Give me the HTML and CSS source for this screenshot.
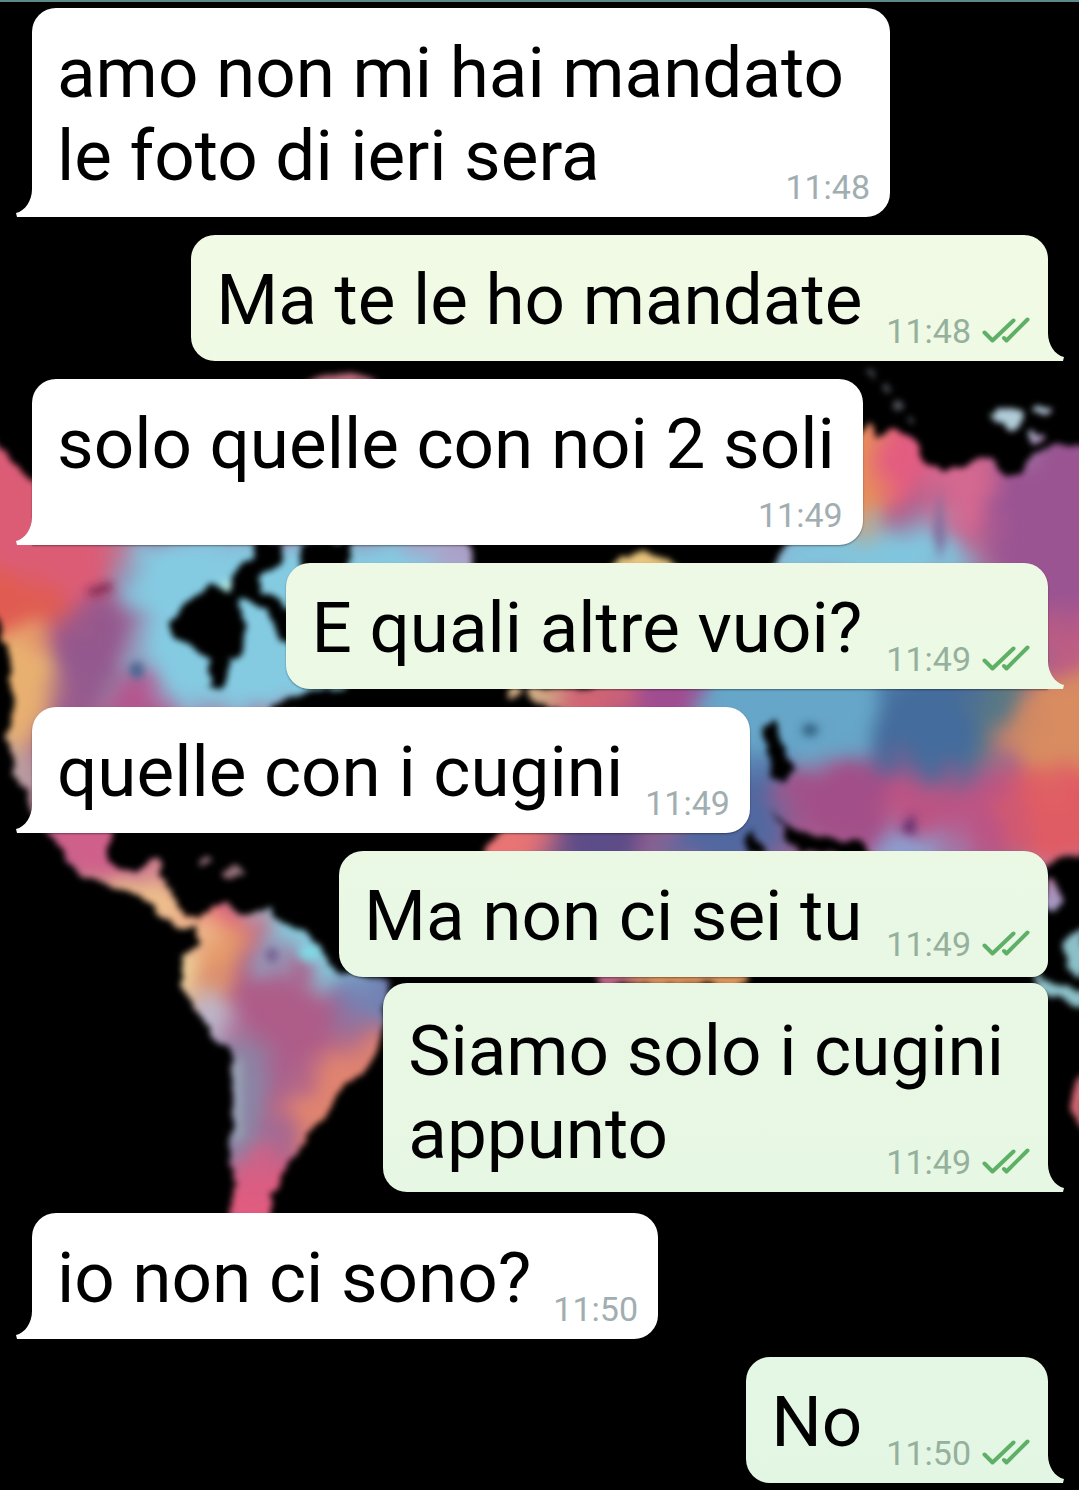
FILE: index.html
```
<!DOCTYPE html>
<html lang="it">
<head>
<meta charset="UTF-8">
<meta name="viewport" content="width=device-width, initial-scale=1.0">
<title>Chat</title>
<link rel="stylesheet" href="styles.css">
</head>
<body>
<svg class="wallpaper" viewBox="0 0 1079 1490" preserveAspectRatio="xMidYMin slice" aria-hidden="true">
  <defs>
    <filter id="soft" filterUnits="userSpaceOnUse" x="-40" y="0" width="1160" height="1490" color-interpolation-filters="sRGB">
      <feGaussianBlur stdDeviation="10" result="blobs"/>
      <feTurbulence type="fractalNoise" baseFrequency="0.025" numOctaves="3" seed="9" result="noise"/>
      <feDisplacementMap in="blobs" in2="noise" scale="60" xChannelSelector="R" yChannelSelector="G"/>
      <feGaussianBlur stdDeviation="8"/>
    </filter>
    <filter id="softer" x="-20%" y="-20%" width="140%" height="140%"><feGaussianBlur stdDeviation="5"/></filter>
    <filter id="coast" filterUnits="userSpaceOnUse" x="-20" y="0" width="1120" height="1490" color-interpolation-filters="sRGB">
      <feTurbulence type="fractalNoise" baseFrequency="0.06" numOctaves="2" seed="4" result="noise"/>
      <feDisplacementMap in="SourceGraphic" in2="noise" scale="14" xChannelSelector="R" yChannelSelector="G"/>
      <feGaussianBlur stdDeviation="3"/>
    </filter>
    <mask id="land" maskUnits="userSpaceOnUse" x="0" y="0" width="1079" height="1490">
      <g filter="url(#coast)">
        <g fill="#fff">
          <!-- north and central america -->
          <path d="M-20 430L10 458L36 482L60 400L300 400L470 540L474 563L450 620L330 695L300 712L200 780L112 830L108 852L118 871L138 874L146 862L158 857L164 864L158 878L174 888L176 904L184 916L200 919L198 925L174 925L158 912L136 896L106 884L74 872L62 850L48 834L34 812L16 776L6 738L14 700L8 660L-2 620L-20 600Z"/>
          <!-- south america -->
          <path d="M198 925L205 910L225 904L250 913L270 909L285 925L305 931L318 945L326 963L345 974L390 982L384 1020L375 1052L366 1072L340 1088L330 1110L310 1136L292 1160L278 1180L272 1196L274 1222L230 1222L234 1180L230 1150L233 1100L231 1050L210 1035L195 1005L180 982L183 960L196 945Z"/>
          <!-- greenland, scandinavia, britain -->
          <path d="M300 385Q345 365 382 385Z"/>
          <path d="M604 570Q642 536 678 570Z"/>
          <circle cx="514" cy="692" r="7"/>
          <ellipse cx="543" cy="694" rx="16" ry="10"/>
          <!-- asia -->
          <path d="M785 545L840 480L855 440L866 424L876 438L894 430L916 438L926 464L948 470L964 468L978 456L992 458L1006 478L1022 474L1036 452L1060 446L1100 448L1100 850L1066 856L1040 870L850 870L740 860L720 830L600 720L545 708L556 690L640 680L740 640Z"/>
          <!-- africa -->
          <path d="M478 860L500 832L560 822L650 824L760 820L780 860L745 985L600 985L560 900Z"/>
          <!-- islands -->
          <path d="M988 411Q1008 404 1026 412L1012 432Q996 426 988 411Z"/>
          <ellipse cx="1042" cy="410" rx="10" ry="5"/>
          <ellipse cx="1034" cy="438" rx="9" ry="6"/>
          <ellipse cx="1052" cy="895" rx="10" ry="16"/>
          <path d="M1062 945L1085 925L1085 975L1066 966Z"/>
          <path d="M1025 958L1044 980L1085 994L1085 1006L1040 994Z"/>
          <path d="M1085 1065L1070 1095L1074 1122L1085 1132Z"/>
          <ellipse cx="205" cy="862" rx="9" ry="4"/>
          <ellipse cx="234" cy="871" rx="12" ry="5"/>
        </g>
        <g fill="#000">
          <path d="M172 622L190 600L212 584L232 592L246 625L240 658L228 660L224 688L210 686L208 660L194 650L176 637Z"/>
          <path d="M230 598L234 572L252 560L260 536L282 545L282 566L262 576L264 590L282 602L296 620L292 642L276 638L272 614L250 602Z"/>
          <path d="M304 540L352 540L346 572L300 572Z"/>
          <path d="M272 704L300 694L330 690L330 712L272 712Z"/>
          <path d="M740 540L785 540L780 552L740 556Z"/>
          <path d="M758 728L774 722L782 744L796 772L784 784L774 776L768 752Z"/>
          <path d="M770 812L788 828L820 838L856 840L874 856L800 852Z"/>
          <path d="M750 830L766 852L746 852Z"/>
        </g>
      </g>
    </mask>
  </defs>
  <g mask="url(#land)">
    <rect width="1079" height="1490" fill="#a8628f"/>
    <g filter="url(#soft)">
      <!-- north america -->
      <path d="M-40 400L130 480L120 560L70 640L-40 600Z" fill="#dc5c76"/>
      <path d="M-40 570L40 570L70 610L40 650L-40 640Z" fill="#e05c52"/>
      <path d="M-40 625L48 636L62 680L36 740L-40 740Z" fill="#e8b070"/>
      <path d="M64 620L110 590L130 660L90 710L50 780L60 700Z" fill="#93588e"/>
      <path d="M130 530L480 530L480 600L400 720L190 720L140 660L120 590Z" fill="#84cbe2"/>
      <ellipse cx="118" cy="682" rx="20" ry="14" fill="#9598ae"/>
      <path d="M120 690L160 680L180 720L90 720Z" fill="#b8508c"/>
      <path d="M400 540L500 540L500 570L430 570Z" fill="#b49ac4"/>
      <path d="M-40 730L30 740L50 820L-40 820Z" fill="#b99da0"/>
      <path d="M30 810L140 810L120 870L60 870Z" fill="#d0608a"/>
      <path d="M136 840L190 840L186 882L140 876Z" fill="#d88090"/>
      <path d="M60 876L140 876L225 904L215 950L140 926Z" fill="#f0c08c"/>
      <!-- south america -->
      <path d="M190 880L245 880L262 925L220 960Z" fill="#e2607c"/>
      <path d="M190 940L236 924L244 970L210 1010L180 980Z" fill="#e69a68"/>
      <path d="M150 940L196 950L208 988L150 990Z" fill="#f4dc9c"/>
      <path d="M244 870L300 880L350 940L400 960L370 1010L320 988L260 940Z" fill="#86cbdc"/>
      <path d="M345 965L420 965L405 1035L340 1020Z" fill="#7283b4"/>
      <path d="M240 950L290 975L340 1000L332 1060L290 1080L230 1010Z" fill="#ae5c88"/>
      <path d="M160 990L215 1000L240 1060L190 1070Z" fill="#bcb8cc"/>
      <path d="M195 1040L262 1040L270 1160L195 1160Z" fill="#8a86a6"/>
      <path d="M420 1020L390 1120L300 1180L290 1100L340 1050Z" fill="#e08470"/>
      <path d="M195 1172L320 1155L320 1270L195 1270Z" fill="#e05c80"/>
      <!-- europe and asia -->
      <path d="M290 330L410 330L410 410L290 410Z" fill="#c87484"/>
      <path d="M590 510L700 510L690 600L590 600Z" fill="#e8c47c"/>
      <path d="M480 660L560 660L550 725L480 725Z" fill="#d0ac84"/>
      <path d="M550 660L620 660L620 740L550 740Z" fill="#d06474"/>
      <path d="M620 660L700 650L700 740L620 740Z" fill="#a04c90"/>
      <path d="M830 400L878 410L882 530L830 530Z" fill="#e89058"/>
      <path d="M880 390L925 390L925 480L880 510Z" fill="#e45c80"/>
      <path d="M925 430L1000 420L1020 500L980 540L930 520Z" fill="#d46890"/>
      <path d="M1000 430L1130 410L1130 680L1050 660L990 560Z" fill="#9a5492"/>
      <path d="M1030 630L1120 600L1120 680L1050 690Z" fill="#bc5c84"/>
      <path d="M770 540L850 522L940 522L990 580L770 590Z" fill="#80c6de"/>
      <path d="M700 650L960 650L920 730L800 770L740 800L700 720Z" fill="#66a6c8"/>
      <path d="M890 670L1030 660L1000 740L970 790L860 770Z" fill="#446c9c"/>
      <path d="M985 660L1030 650L1020 720L980 760Z" fill="#5c7a80"/>
      <path d="M1040 680L1130 650L1130 800L1000 790L1010 740Z" fill="#d88c60"/>
      <path d="M790 780L860 762L910 780L880 850L800 830Z" fill="#a24e88"/>
      <path d="M890 780L1010 775L1030 860L880 850Z" fill="#bc5484"/>
      <path d="M1000 785L1130 765L1130 880L1020 860Z" fill="#e05c64"/>
      <path d="M735 760L770 756L795 840L700 880L650 850Z" fill="#5068a0"/>
      <path d="M880 835L960 835L950 885L880 885Z" fill="#8aa0d0"/>
      <!-- africa -->
      <path d="M440 800L560 800L540 890L440 890Z" fill="#e87474"/>
      <path d="M560 800L640 800L640 890L550 890Z" fill="#5c4c88"/>
      <path d="M570 940L660 940L660 1020L570 1020Z" fill="#bc6488"/>
      <path d="M640 940L780 940L780 1020L640 1020Z" fill="#dc945c"/>
      <!-- islands -->
      <path d="M960 360L1080 360L1070 428L1020 446L960 440Z" fill="#b0ccd8"/>
      <path d="M1000 945L1130 900L1130 1040L1010 1030Z" fill="#8cc0c8"/>
      <ellipse cx="1056" cy="895" rx="28" ry="30" fill="#a49cc8"/>
      <path d="M1030 1040L1120 1040L1120 1150L1030 1150Z" fill="#d46874"/>
      <path d="M180 835L275 840L270 895L180 890Z" fill="#8c7078"/>
    </g>
    <g filter="url(#softer)">
      <path d="M86 590L112 582L112 590L92 596Z" fill="#7c2048"/>
      <path d="M128 668L140 660L144 674L136 680Z" fill="#38608c"/>
      <path d="M934 532L940 486L945 540L940 562Z" fill="#7c6c9c"/>
      <ellipse cx="810" cy="730" rx="8" ry="6" fill="#2c5878"/>
      <path d="M900 830L914 812L916 836Z" fill="#642c6c"/>
      <ellipse cx="272" cy="955" rx="5" ry="7" fill="#685088"/>
      <ellipse cx="310" cy="952" rx="12" ry="9" fill="#80d8e4"/>
      <ellipse cx="228" cy="588" rx="8" ry="7" fill="#b8e8d8"/>
      <path d="M232 1060L242 1060L242 1140L234 1140Z" fill="#98a4b4"/>
    </g>
  </g>
  <!-- arctic islands off the siberian coast -->
  <path d="M868 372L886 386L902 410L918 430" fill="none" stroke="#50545c" stroke-width="6" stroke-dasharray="10 10" filter="url(#coast)"/>
</svg>

<svg class="symbols" aria-hidden="true">
  <symbol id="read" viewBox="0 0 48 27">
    <path d="M2.500 15.500L10.500 23.500L31.500 3.500M22 21L24.500 23.500L45.500 2.500" fill="none" stroke="currentColor" stroke-width="4" stroke-linecap="round" stroke-linejoin="round"/>
  </symbol>
</svg>

<main class="chat">
  <div class="message in overlap">
    <p class="text">amo non mi hai mandato<br>le foto di ieri sera</p>
    <div class="meta"><time>11:48</time></div>
  </div>
  <div class="message out">
    <p class="text">Ma te le ho mandate</p>
    <div class="meta"><time>11:48</time><svg class="ticks" role="img" aria-label="Letto"><use href="#read"/></svg></div>
  </div>
  <div class="message in stacked">
    <p class="text">solo quelle con noi 2 soli</p>
    <div class="meta"><time>11:49</time></div>
  </div>
  <div class="message out">
    <p class="text">E quali altre vuoi?</p>
    <div class="meta"><time>11:49</time><svg class="ticks" role="img" aria-label="Letto"><use href="#read"/></svg></div>
  </div>
  <div class="message in">
    <p class="text">quelle con i cugini</p>
    <div class="meta"><time>11:49</time></div>
  </div>
  <div class="message out first">
    <p class="text">Ma non ci sei tu</p>
    <div class="meta"><time>11:49</time><svg class="ticks" role="img" aria-label="Letto"><use href="#read"/></svg></div>
  </div>
  <div class="message out overlap last">
    <p class="text">Siamo solo i cugini<br>appunto</p>
    <div class="meta"><time>11:49</time><svg class="ticks" role="img" aria-label="Letto"><use href="#read"/></svg></div>
  </div>
  <div class="message in">
    <p class="text">io non ci sono?</p>
    <div class="meta"><time>11:50</time></div>
  </div>
  <div class="message out">
    <p class="text">No</p>
    <div class="meta"><time>11:50</time><svg class="ticks" role="img" aria-label="Letto"><use href="#read"/></svg></div>
  </div>
</main>
</body>
</html>
```

FILE: styles.css
```
* {
  box-sizing: border-box;
}
body {
  margin: 0;
  background-color: #000;
  font-family: Roboto, sans-serif;
}
.wallpaper {
  position: absolute;
  top: 0;
  left: 0;
  width: 100%;
  height: 100%;
  z-index: -1;
}
.symbols {
  display: none;
}
.chat {
  display: flex;
  flex-direction: column;
  gap: 18px;
  padding: 6px 31px 7px 32px;
  border-top: 2px solid #5c8a88;
}
.message {
  position: relative;
  display: flex;
  align-items: flex-end;
  gap: 24px;
  padding: 23px 20px 20px 25px;
  border-radius: 24px;
  box-shadow: 0 1px 2px rgba(0, 0, 0, 0.4);
}
.text {
  margin: 0;
  font-size: 71px;
  line-height: 83px;
  color: #000;
}
.meta {
  display: flex;
  align-items: center;
  gap: 11px;
  height: 20px;
  font-size: 34px;
  line-height: 20px;
  color: #a1aeb1;
}
.in {
  align-self: flex-start;
  gap: 22px;
  background: #fff;
  border-bottom-left-radius: 0;
}
.out {
  align-self: flex-end;
  padding-right: 18px;
  background: linear-gradient(#f3fbe4, #e3f6e4) fixed;
  border-bottom-right-radius: 0;
}
.out .meta {
  color: #95b09c;
}
.ticks {
  width: 48px;
  height: 27px;
  margin-bottom: 2px;
  color: #5fb067;
}

/* bubble tails */
.message::after {
  content: "";
  position: absolute;
  bottom: 0;
  width: 16px;
  height: 28px;
  background: inherit;
}
.in::after {
  right: 100%;
  clip-path: path("M16 0C16 12 9 22 0 24L1 28H16Z");
}
.out::after {
  left: 100%;
  clip-path: path("M0 0C0 12 7 22 16 24L15 28H0Z");
}

/* time shares the last line of a longer text */
.overlap {
  display: grid;
}
.overlap .text,
.overlap .meta {
  grid-area: 1 / 1;
}
.overlap .text {
  padding-right: 26px;
}
.overlap .meta {
  align-self: end;
  justify-self: end;
}
/* time on a row of its own */
.stacked {
  flex-direction: column;
  gap: 20px;
}
.stacked .text {
  padding-right: 8px;
}

/* messages of the same group */
.first {
  margin-bottom: -12px;
  border-bottom-right-radius: 16px;
}
.first::after {
  display: none;
}
.last {
  margin-bottom: 3px;
  padding-top: 26px;
  padding-bottom: 17px;
  border-top-right-radius: 16px;
}
.first .meta,
.last .meta {
  margin-bottom: 3px;
}
```
